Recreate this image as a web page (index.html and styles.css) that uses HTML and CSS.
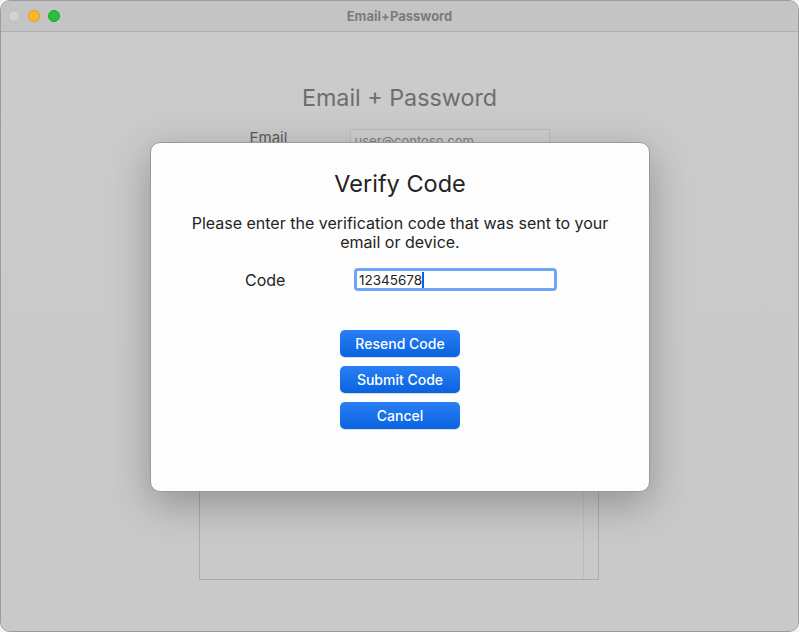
FILE: index.html
```html
<!DOCTYPE html>
<html>
<head>
<meta charset="utf-8">
<link rel="stylesheet" href="styles.css">
</head>
<body>
<div class="window">
  <div class="titlebar">
    <div class="lights">
      <span class="light close"></span>
      <span class="light min"></span>
      <span class="light max"></span>
    </div>
    <div class="wtitle">Email+Password</div>
  </div>
  <div class="content">
    <h1 class="bg-heading">Email + Password</h1>
    <div class="bg-row">
      <span class="bg-label">Email</span>
      <span class="bg-field">user@contoso.com</span>
    </div>
    <div class="bg-area">
      <div class="bg-area-main"></div>
      <div class="bg-area-scroll"></div>
    </div>
  </div>
  <div class="sheet">
    <h2 class="sheet-title">Verify Code</h2>
    <p class="sheet-text">Please enter the verification code that was sent to your email or device.</p>
    <div class="code-row">
      <span class="code-label">Code</span>
      <div class="code-input"><span class="code-value">12345678</span><span class="caret"></span></div>
    </div>
    <div class="buttons">
      <button class="btn">Resend Code</button>
      <button class="btn">Submit Code</button>
      <button class="btn">Cancel</button>
    </div>
  </div>
</div>
</body>
</html>
```
FILE: styles.css
```css
html, body {
  margin: 0;
  padding: 0;
  background: #f2f2f2;
}
body {
  font-family: "Inter", "Roboto", "Liberation Sans", sans-serif;
}
.window {
  position: relative;
  width: 799px;
  height: 632px;
  box-sizing: border-box;
  border-radius: 10px;
  border: 1px solid #9c9c9c;
  background: #cbcbcb;
  overflow: hidden;
  display: flex;
  flex-direction: column;
}
.titlebar {
  height: 30px;
  flex: none;
  background: #c4c4c4;
  border-bottom: 1px solid #b0b0b0;
  position: relative;
  display: flex;
  align-items: center;
  justify-content: center;
}
.lights {
  position: absolute;
  left: 7px;
  top: 9px;
  display: flex;
  gap: 8px;
}
.light {
  width: 12px;
  height: 12px;
  border-radius: 50%;
  box-sizing: border-box;
}
.light.close { background: #d3d3d3; border: 1px solid #bdbdbd; }
.light.min { background: #fdb52c; border: 1px solid #dc9a20; }
.light.max { background: #28c13c; border: 1px solid #1ea32f; }
.wtitle {
  font-size: 13px;
  font-weight: 700;
  color: #7b7b7b;
}
.content {
  flex: 1;
  display: flex;
  flex-direction: column;
  align-items: center;
  background: linear-gradient(#cbcbcb, #c9c9c9);
}
.bg-heading {
  margin: 51px 0 0;
  font-size: 23.3px;
  font-weight: 400;
  line-height: 30px;
  color: #6e6e6e;
}
.bg-row {
  margin-top: 16px;
  width: 300px;
  display: flex;
  align-items: flex-start;
}
.bg-label {
  width: 100px;
  font-size: 15px;
  color: #5a5a5a;
  line-height: 18px;
}
.bg-field {
  width: 200px;
  height: 22px;
  box-sizing: border-box;
  border: 1px solid #bdbdbd;
  background: #cfcfcf;
  font-size: 13px;
  color: #7e7e7e;
  padding: 3px 4px;
}
.bg-area {
  margin-top: 309px;
  width: 400px;
  height: 120px;
  box-sizing: border-box;
  border: 1px solid #acacac;
  display: flex;
  margin-left: -1px;
}
.bg-area-main { flex: 1; }
.bg-area-scroll {
  width: 14px;
  border-left: 1px solid #bebebe;
}
.sheet {
  position: absolute;
  left: 149px;
  top: 141px;
  width: 500px;
  height: 350px;
  box-sizing: border-box;
  background: #fdfdfd;
  border-radius: 10px;
  border: 1px solid #9a9a9a;
  box-shadow: 0 12px 40px rgba(0,0,0,0.28);
  display: flex;
  flex-direction: column;
  align-items: center;
  padding-top: 26px;
}
.sheet-title {
  margin: 0;
  font-size: 23.5px;
  font-weight: 400;
  line-height: 30px;
  color: #242424;
}
.sheet-text {
  margin: 15px 0 0;
  width: 450px;
  text-align: center;
  font-size: 16px;
  line-height: 19px;
  color: #242424;
}
.code-row {
  margin-top: 16px;
  align-self: stretch;
  display: flex;
  align-items: center;
  padding-left: 94px;
}
.code-label {
  width: 109px;
  font-size: 16px;
  color: #242424;
}
.code-input {
  width: 203px;
  height: 23px;
  box-sizing: border-box;
  border: 3px solid #6fa5f5;
  border-radius: 4px;
  background: #fff;
  display: flex;
  align-items: center;
  padding-left: 2px;
}
.code-value {
  font-size: 13.5px;
  color: #222;
}
.caret {
  width: 2px;
  height: 16px;
  background: #0a64e2;
}
.buttons {
  margin-top: 39px;
  display: flex;
  flex-direction: column;
  gap: 9px;
}
.btn {
  width: 120px;
  height: 27px;
  border: none;
  border-radius: 5px;
  background: linear-gradient(#2a7ff5, #0963e0);
  box-shadow: 0 1px 1px rgba(0,0,0,0.15);
  color: #fff;
  font-family: inherit;
  font-size: 14px;
  font-weight: 500;
  padding: 0;
}
```
